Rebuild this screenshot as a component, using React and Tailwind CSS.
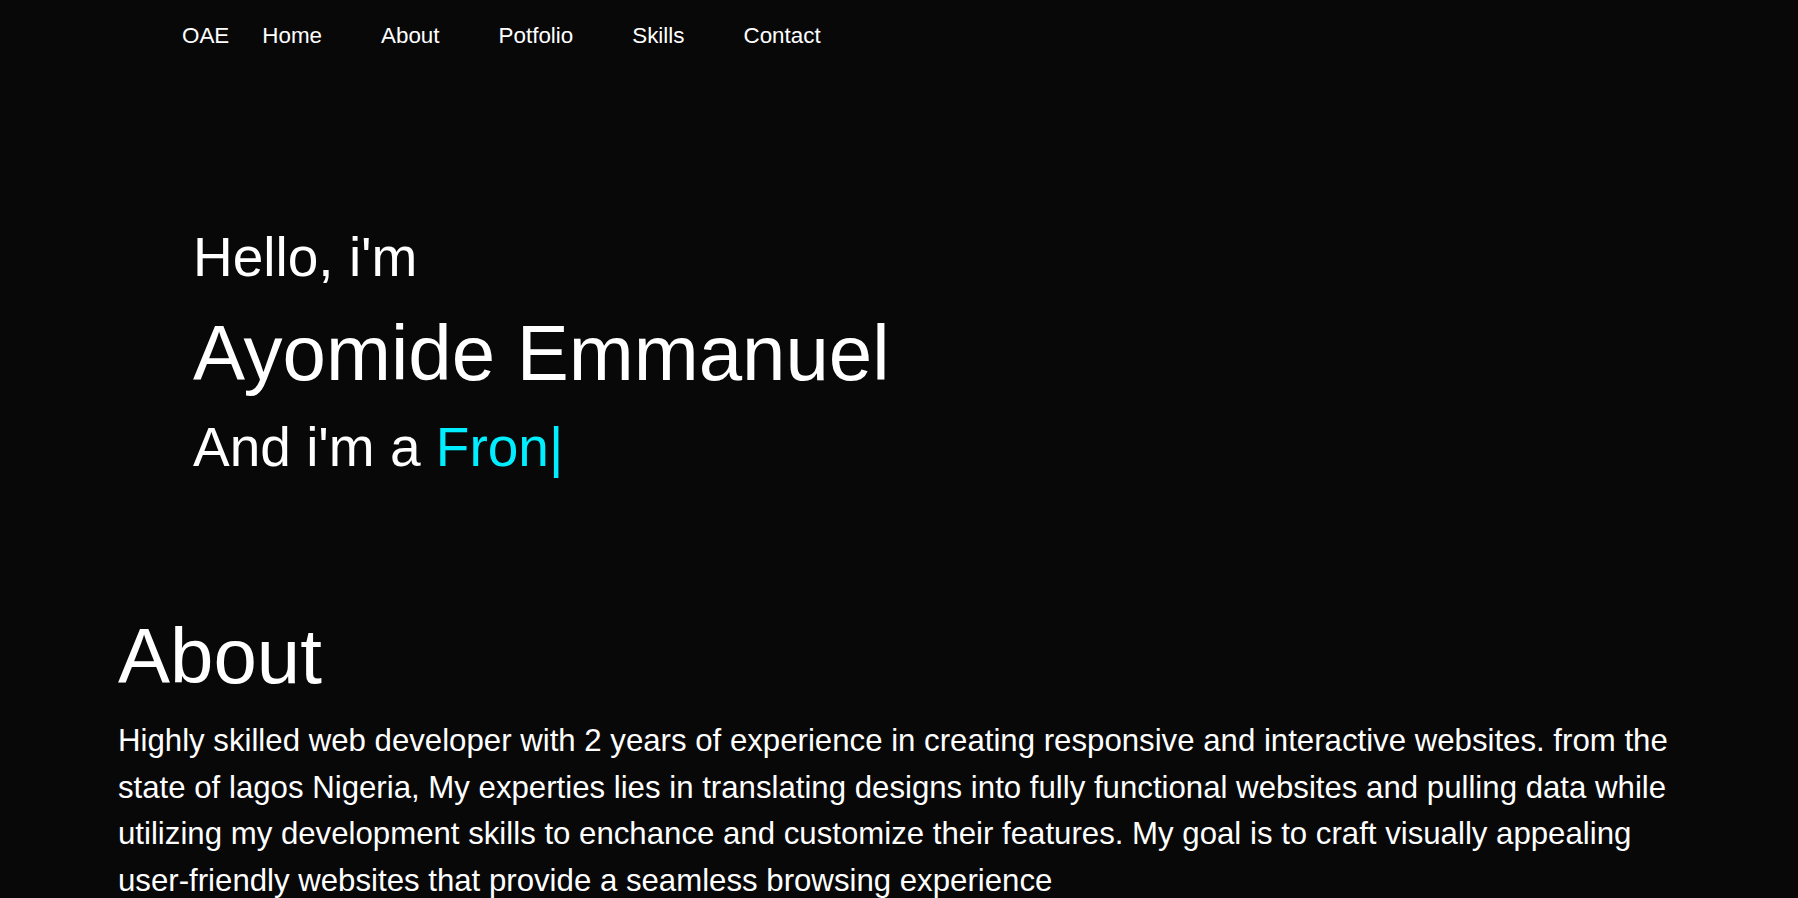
export default function App() {
  const links = ['Home', 'About', 'Potfolio', 'Skills', 'Contact']

  return (
    <div className="min-h-screen bg-[#080808] text-white font-['Liberation_Sans',Arial,sans-serif]">
      <nav className="flex pl-[182px] pt-[25px] text-[22.4px] leading-[22px]">
        <a href="#" className="text-white">OAE</a>
        <ul className="ml-[33px] flex gap-[59px]">
          {links.map(link => (
            <li key={link}>
              <a href="#" className="text-white">{link}</a>
            </li>
          ))}
        </ul>
      </nav>

      <section className="pl-[193px] pt-[183px]">
        <h3 className="text-[55px] leading-none">Hello, i'm</h3>
        <h1 className="mt-[29px] text-[78px] leading-none">Ayomide Emmanuel</h1>
        <h3 className="mt-[28px] text-[55px] leading-none">
          And i'm a <span className="text-[#00eeff]">Fron|</span>
        </h3>
      </section>

      <section className="pl-[118px] pr-[118px] pt-[142px]">
        <h2 className="text-[78px] leading-none">About</h2>
        <p className="mt-[23px] text-[31.2px] leading-[46.5px]">
          Highly skilled web developer with 2 years of experience in creating responsive and interactive websites. from the state of lagos Nigeria, My experties lies in translating designs into fully functional websites and pulling data while utilizing my development skills to enchance and customize their features. My goal is to craft visually appealing user-friendly websites that provide a seamless browsing experience
        </p>
      </section>
    </div>
  )
}
